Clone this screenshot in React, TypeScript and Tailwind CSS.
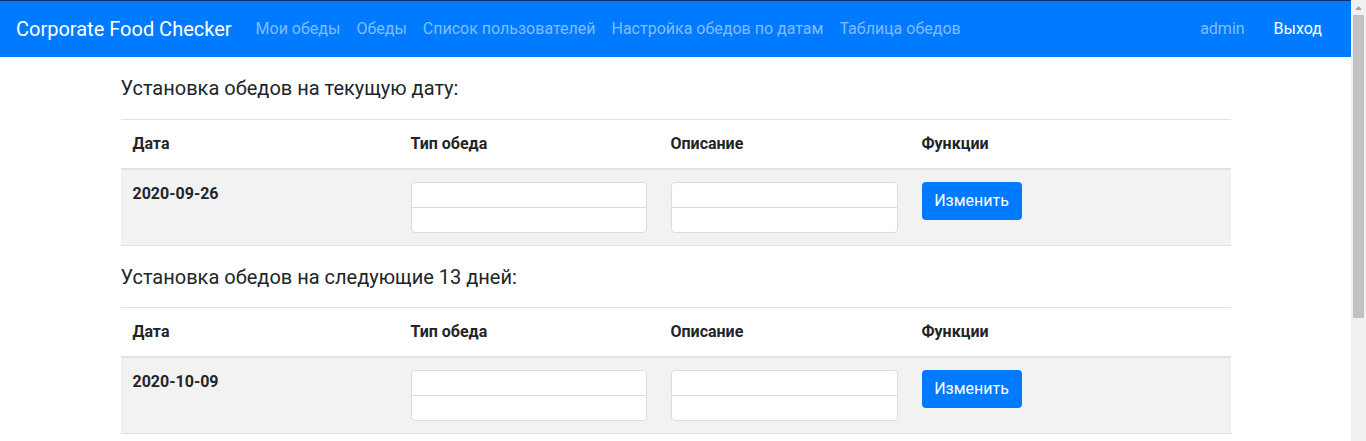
import React from "react";

const font = { fontFamily: "Roboto, 'Liberation Sans', sans-serif" };

function InputStack({ width }: { width: string }) {
  return (
    <div className={`flex flex-col ${width}`}>
      <input className="h-[26px] w-full rounded-t-[4px] border border-[#dcdcdc] bg-white outline-none" />
      <input className="-mt-px h-[26px] w-full rounded-b-[4px] border border-[#dcdcdc] bg-white outline-none" />
    </div>
  );
}

function Section({ title, date, first }: { title: string; date: string; first?: boolean }) {
  return (
    <div>
      <h5 className={`text-[20px] leading-[24px] text-[#212529] ${first ? "pt-[19px] pb-[19px]" : "pt-[19px] pb-[18px]"}`}>
        {title}
      </h5>
      <table className="w-full border-collapse text-[16px] text-[#212529]">
        <thead>
          <tr>
            <th className="w-[278px] border-t border-b-2 border-[#dee2e6] px-3 py-3 text-left font-bold leading-6">Дата</th>
            <th className="w-[260px] border-t border-b-2 border-[#dee2e6] px-3 py-3 text-left font-bold leading-6">Тип обеда</th>
            <th className="w-[251px] border-t border-b-2 border-[#dee2e6] px-3 py-3 text-left font-bold leading-6">Описание</th>
            <th className="border-t border-b-2 border-[#dee2e6] px-3 py-3 text-left font-bold leading-6">Функции</th>
          </tr>
        </thead>
        <tbody>
          <tr className="bg-[#f2f2f2]">
            <td className="border-t border-b border-[#dee2e6] px-3 py-3 align-top font-bold leading-6">{date}</td>
            <td className="border-t border-b border-[#dee2e6] px-3 py-3 align-top"><InputStack width="w-[236px]" /></td>
            <td className="border-t border-b border-[#dee2e6] px-3 py-3 align-top"><InputStack width="w-[227px]" /></td>
            <td className="border-t border-b border-[#dee2e6] px-3 py-3 align-top">
              <button className="h-[38px] w-[100px] rounded-[4px] bg-[#007bff] text-[16px] leading-6 text-white">Изменить</button>
            </td>
          </tr>
        </tbody>
      </table>
    </div>
  );
}

export default function App() {
  return (
    <div className="flex h-[441px] w-[1366px] overflow-hidden bg-white" style={font}>
      <div className="flex w-[1351px] flex-col">
        <div className="h-px bg-[#12306b]" />
        <nav className="flex h-[56px] items-center bg-[#007bff] pl-4 pr-[29px]">
          <span className="mr-4 text-[20px] leading-[30px] text-white">Corporate Food Checker</span>
          <div className="flex text-[16px] leading-6 text-[#80bdff]">
            <span className="px-2">Мои обеды</span>
            <span className="px-2">Обеды</span>
            <span className="px-2">Список пользователей</span>
            <span className="px-2">Настройка обедов по датам</span>
            <span className="px-2">Таблица обедов</span>
          </div>
          <div className="ml-auto flex items-center text-[16px] leading-6">
            <span className="text-[#80bdff]">admin</span>
            <span className="ml-[29px] text-white">Выход</span>
          </div>
        </nav>
        <main className="mx-auto w-[1110px]">
          <Section first title="Установка обедов на текущую дату:" date="2020-09-26" />
          <Section title="Установка обедов на следующие 13 дней:" date="2020-10-09" />
        </main>
      </div>
      <div className="flex w-[15px] flex-col bg-[#f1f1f1]">
        <div className="flex h-[15px] items-center justify-center">
          <svg width="7" height="4" viewBox="0 0 7 4"><polygon points="3.5,0 7,4 0,4" fill="#a3a3a3" /></svg>
        </div>
        <div className="mx-[2px] h-[303px] bg-[#c1c1c1]" />
      </div>
    </div>
  );
}
